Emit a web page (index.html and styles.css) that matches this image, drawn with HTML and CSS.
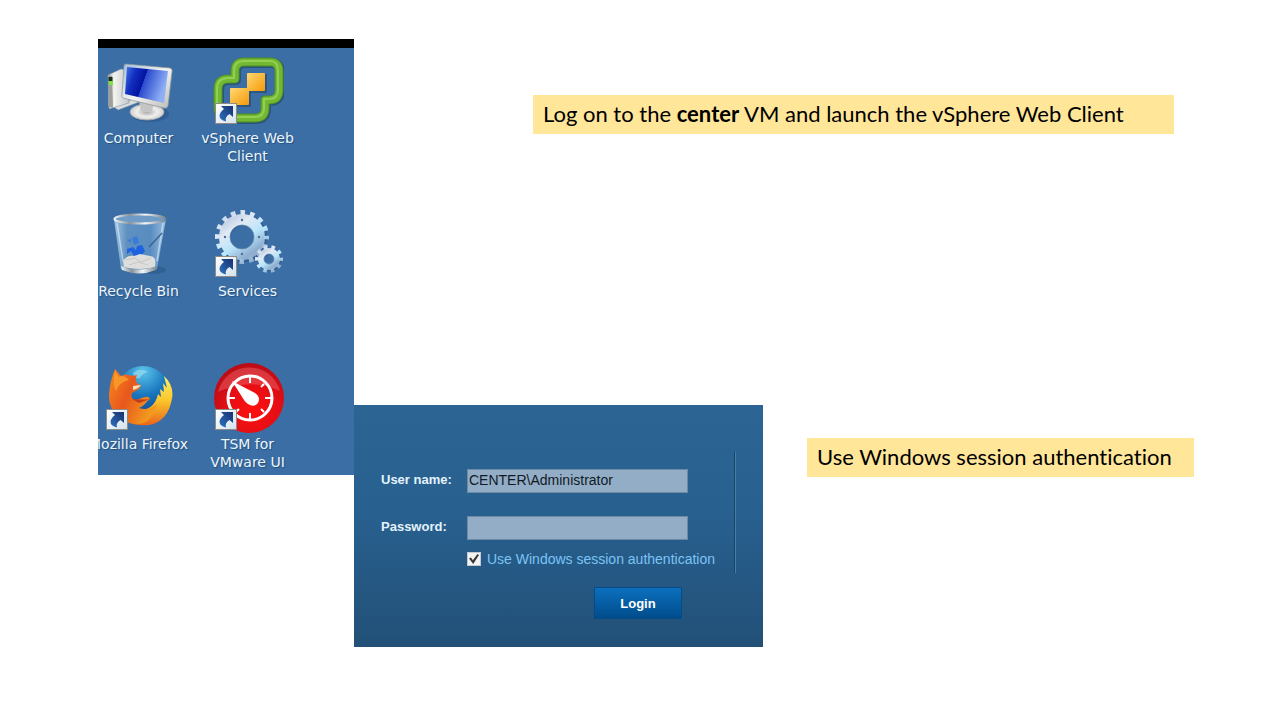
FILE: index.html
```
<!DOCTYPE html>
<html lang="en">
<head>
<meta charset="utf-8">
<title>Launch the vSphere Web Client</title>
<link rel="stylesheet" href="styles.css">
</head>
<body>
<svg class="defs" width="0" height="0" aria-hidden="true">
  <defs>
    <linearGradient id="box" x1="0" y1="0" x2="1" y2="1"><stop offset="0" stop-color="#ffffff"/><stop offset="1" stop-color="#d3e2ee"/></linearGradient>
    <linearGradient id="arrow" x1="1" y1="0" x2="0" y2="1"><stop offset="0" stop-color="#17306f"/><stop offset="1" stop-color="#2f72c0"/></linearGradient>
    <symbol id="shortcut" viewBox="0 0 22 21">
      <rect x=".5" y=".5" width="21" height="20" fill="url(#box)" stroke="#8f8b86"/>
      <path d="M6 3H18V14L14.500 11Q9.500 14 11 18.500Q4.500 17 4.500 12.500Q5 9 9 6Z" fill="url(#arrow)"/>
    </symbol>
  </defs>
</svg>
<main class="slide">
  <section class="desktop" aria-label="Desktop">
    <div class="icons">
      <button class="icon" type="button">
        <svg class="art" viewBox="0 0 72 72" aria-hidden="true">
          <defs>
            <linearGradient id="scr" x1="0" y1="0" x2="1" y2=".3"><stop offset="0" stop-color="#4a78e8"/><stop offset=".25" stop-color="#1230c0"/><stop offset=".5" stop-color="#0412a0"/><stop offset=".51" stop-color="#2a49cf"/><stop offset="1" stop-color="#8fb0f5"/></linearGradient>
            <linearGradient id="frame" x1="0" y1="0" x2="1" y2="1"><stop offset="0" stop-color="#9fbfd8"/><stop offset=".5" stop-color="#f4f4f0"/><stop offset="1" stop-color="#b9bab6"/></linearGradient>
            <linearGradient id="tower"><stop offset="0" stop-color="#b4b6b4"/><stop offset=".3" stop-color="#f4f3ef"/><stop offset="1" stop-color="#c0c5ca"/></linearGradient>
            <radialGradient id="base"><stop offset="0" stop-color="#a8a8a6"/><stop offset=".6" stop-color="#efefed"/><stop offset="1" stop-color="#cfd0cf"/></radialGradient>
          </defs>
          <path d="M11 51L32 42L36 46L15 54Z" fill="#d9dde0" stroke="#8c9aa7" stroke-width=".6"/>
          <path d="M5 19L18 13L26 15V47L6 53Z" fill="url(#tower)" stroke="#8797a6" stroke-width=".6"/>
          <path d="M5 19L9 20L10 52L5 50Z" fill="#9b9f9e"/>
          <rect x="5.500" y="21" width="4" height="4" fill="#18301a"/><rect x="6" y="25" width="4" height="4" fill="#7de23c"/>
          <ellipse cx="47" cy="58" rx="19" ry="8" fill="#2d5583" opacity=".6"/>
          <path d="M36 43L52 47L50 57H37Z" fill="#b1b3b3"/>
          <ellipse cx="44" cy="56" rx="17" ry="8" fill="url(#base)" stroke="#a1a5a7" stroke-width=".8"/>
          <path d="M38 44L51 47L49 55Q43 58 37 54Z" fill="#c4c5c4"/>
          <path d="M23 8L67 12Q70 13 69 16L65 50Q64 53 61 52L20 42Q18 41 19 38L21 10Q21 8 23 8Z" fill="url(#frame)" stroke="#8d9499" stroke-width=".7"/>
          <path d="M24 11L65 15L61 47L22 38Z" fill="url(#scr)"/>
        </svg>
        <span class="label">Computer</span>
      </button>
      <button class="icon" type="button">
        <svg class="art" viewBox="0 0 72 72" aria-hidden="true">
          <defs>
            <linearGradient id="or" x1="0" y1="0" x2="1" y2="1"><stop offset="0" stop-color="#ffd873"/><stop offset="1" stop-color="#f59a08"/></linearGradient>
          </defs>
          <g fill="none" stroke-linejoin="round">
            <path d="M32 6H58Q67 6 67 15V34Q67 44 57 44H53V52Q53 62 43 62H16Q6 62 6 52V33Q6 23 16 23H23V15Q23 6 32 6Z" transform="translate(1 1)" stroke="#284c6c" stroke-width="10" opacity=".75"/>
            <path d="M32 6H58Q67 6 67 15V34Q67 44 57 44H53V52Q53 62 43 62H16Q6 62 6 52V33Q6 23 16 23H23V15Q23 6 32 6Z" stroke="#4f8f24" stroke-width="9"/>
            <path d="M32 6H58Q67 6 67 15V34Q67 44 57 44H53V52Q53 62 43 62H16Q6 62 6 52V33Q6 23 16 23H23V15Q23 6 32 6Z" stroke="#72b832" stroke-width="7"/>
            <path d="M32 5H58Q66 5 66 15V34Q66 43 57 43H52V52Q52 61 43 61H16Q5 61 5 52V33Q5 22 16 22H22V15Q22 5 32 5Z" stroke="#93cf52" stroke-width="2"/>
          </g>
          <path d="M36 18H55V37H39V51H19V34H36Z" fill="#294b6d" opacity=".7"/>
          <rect x="35" y="17" width="18" height="18" rx="1" fill="url(#or)"/>
          <rect x="18" y="32" width="19" height="17" rx="1" fill="url(#or)"/>
          <use href="#shortcut" x="3" y="47" width="22" height="21"/>
        </svg>
        <span class="label">vSphere Web<br>Client</span>
      </button>
      <button class="icon" type="button">
        <svg class="art" viewBox="0 0 72 72" aria-hidden="true">
          <defs>
            <linearGradient id="glass"><stop offset="0" stop-color="#b9d6ee"/><stop offset=".25" stop-color="#6596c5"/><stop offset=".7" stop-color="#5e92c5"/><stop offset="1" stop-color="#a9cdec"/></linearGradient>
            <linearGradient id="rim"><stop offset="0" stop-color="#eef4f8"/><stop offset=".3" stop-color="#87929b"/><stop offset=".6" stop-color="#f5f7f8"/><stop offset="1" stop-color="#75818c"/></linearGradient>
          </defs>
          <ellipse cx="50" cy="61" rx="13" ry="4" fill="#2b5685" opacity=".6"/>
          <path d="M11 10L18 60Q35 67 54 60L63 10Z" fill="url(#glass)" opacity=".85"/>
          <path d="M14 14L20 52M60 14L54 52" stroke="#cfe5f7" stroke-width="1.500" opacity=".7"/>
          <path d="M59 24L46 38" stroke="#3c6590" stroke-width="1.500"/>
          <path d="M29 29L34 27L36 34L31 36ZM24 31L28 30L28 34Z" fill="#3276dc" opacity=".8"/>
          <path d="M34 37L39 36L42 42L38 47H31L28 42L24 45L24 40L30 38L33 41Z" fill="#1f62df"/>
          <path d="M20 52Q24 46 31 47L37 45L47 47Q54 47 52 58Q36 62 21 58Z" fill="#dedfdd"/>
          <path d="M23 51L32 49L38 53L48 49M26 56L35 53L45 56" stroke="#c6c9c8" fill="none"/>
          <path d="M18 57Q35 64 54 57L53 61Q36 68 19 61Z" fill="url(#rim)"/>
          <ellipse cx="37" cy="10" rx="25.500" ry="4.500" fill="#6e9cc6" stroke="url(#rim)" stroke-width="2.200"/>
        </svg>
        <span class="label">Recycle Bin</span>
      </button>
      <button class="icon" type="button">
        <svg class="art" viewBox="0 0 72 72" aria-hidden="true">
          <defs>
            <linearGradient id="gear" x1="0" y1="0" x2=".7" y2="1"><stop offset="0" stop-color="#bccce2"/><stop offset=".3" stop-color="#e1e9f4"/><stop offset=".65" stop-color="#b9e5fb"/><stop offset="1" stop-color="#8faed0"/></linearGradient>
          </defs>
          <g fill="none" stroke="#2c5585" opacity=".6"><circle cx="31" cy="29" r="18" stroke-width="12"/><circle cx="58" cy="51" r="8" stroke-width="6"/></g>
          <g fill="none" stroke="url(#gear)">
            <circle cx="30" cy="28" r="17.500" stroke-width="11"/>
            <circle cx="30" cy="28" r="24.500" stroke-width="5" stroke-dasharray="4.600 5.022" stroke-dashoffset="2.300"/>
            <circle cx="57" cy="50" r="8" stroke-width="6"/>
            <circle cx="57" cy="50" r="12" stroke-width="4" stroke-dasharray="3.500 4.040" stroke-dashoffset="1.750"/>
          </g>
          <g fill="none" stroke="#6488b0" stroke-width=".8"><circle cx="30" cy="28" r="12"/><circle cx="57" cy="50" r="5"/></g>
          <g fill="#526d91"><circle cx="30" cy="11" r="1.200"/><circle cx="13" cy="28" r="1.200"/><circle cx="47" cy="28" r="1.200"/><circle cx="30" cy="45" r="1.200"/></g>
          <use href="#shortcut" x="3" y="47" width="22" height="21"/>
        </svg>
        <span class="label">Services</span>
      </button>
      <button class="icon" type="button">
        <svg class="art" viewBox="0 0 72 72" aria-hidden="true">
          <defs>
            <radialGradient id="globe" cx=".5" cy=".1" r=".9"><stop offset="0" stop-color="#5cc4ea"/><stop offset=".5" stop-color="#1875bd"/><stop offset="1" stop-color="#123f86"/></radialGradient>
            <linearGradient id="fox" x1="0" y1="0" x2="1" y2=".5"><stop offset="0" stop-color="#f58a1f"/><stop offset=".5" stop-color="#e8571c"/><stop offset="1" stop-color="#f39a1e"/></linearGradient>
            <linearGradient id="tail" x1="0" y1="0" x2="0" y2="1"><stop offset="0" stop-color="#fff06a"/><stop offset=".5" stop-color="#fbc52b"/><stop offset="1" stop-color="#ea641b"/></linearGradient>
          </defs>
          <circle cx="40" cy="31" r="27" fill="url(#globe)"/>
          <path d="M30 11Q36 5 45 10Q39 11 37 16Q32 18 30 11Z" fill="#9cddf1" opacity=".65"/>
          <path d="M61 14Q73 25 68 41C64 58 51 65 37 63C21 62 9 51 8 37L28 42C38 53 52 47 55 32L58 35L57 27L61 30L60 21L64 26Z" fill="url(#tail)"/>
          <path d="M12 7L18 14Q23 11 29 14L34 13Q31 18 35 22Q40 23 36 27L29 31Q27 36 32 38C39 37 44 32 47 37C43 39 42 44 36 46C44 49 50 45 54 42C50 57 42 63 32 62C16 60 5 47 6 32Q7 19 12 7Z" fill="url(#fox)"/>
          <path d="M12 9Q9 23 13 29Q16 20 26 18Q20 12 16 15Z" fill="#f9a42f" opacity=".75"/>
          <path d="M30 24L38 23Q35 27 30 28Z" fill="#f6e0b8"/>
          <path d="M29 37Q38 38 47 37L36 41Z" fill="#bf3d17"/>
          <use href="#shortcut" x="3" y="47" width="22" height="21"/>
        </svg>
        <span class="label">Mozilla Firefox</span>
      </button>
      <button class="icon" type="button">
        <svg class="art" viewBox="0 0 72 72" aria-hidden="true">
          <defs>
            <radialGradient id="red" cx=".55" cy=".65" r=".65"><stop offset="0" stop-color="#ff1010"/><stop offset=".6" stop-color="#e30e14"/><stop offset="1" stop-color="#b80c16"/></radialGradient>
          </defs>
          <circle cx="37" cy="36" r="35" fill="url(#red)"/>
          <path d="M6 30A32 32 0 0 1 68 29Q39 15 6 30Z" fill="#f0868a" opacity=".35"/>
          <circle cx="38" cy="36" r="22" fill="none" stroke="#fff" stroke-width="3"/>
          <g fill="none" stroke="#fff" stroke-width="2"><path d="M38 15V21M38 51V57M17 36H23M53 36H59M52 22L49 25M24 50L27 47M52 50L49 47"/></g>
          <path d="M20 19L43 31Q49 35 46 41Q42 46 36 42Q33 40 32 38Z" fill="#fff"/>
          <use href="#shortcut" x="3" y="47" width="22" height="21"/>
        </svg>
        <span class="label">TSM for<br>VMware UI</span>
      </button>
    </div>
  </section>
  <div class="steps">
    <p class="note note-launch">Log on to the <strong>center</strong> VM and launch the vSphere Web Client</p>
    <div class="signin">
      <section class="login" aria-label="Login">
        <form class="form">
          <label class="name" for="user">User name:</label>
          <input class="field" id="user" type="text" value="CENTER\Administrator">
          <label class="name name-pass" for="pass">Password:</label>
          <input class="field field-pass" id="pass" type="password">
          <div class="option">
            <input class="tick" id="session" type="checkbox" checked>
            <label for="session">Use Windows session authentication</label>
          </div>
          <button class="submit" type="button">Login</button>
        </form>
        <div class="divider"></div>
      </section>
      <p class="note note-auth">Use Windows session authentication</p>
    </div>
  </div>
</main>
</body>
</html>
```
FILE: styles.css
```
* { box-sizing: border-box; }
body { margin: 0; background: #fff; color: #000; }
.defs { position: absolute; }
.slide { display: flex; align-items: flex-start; padding: 39px 86px 73px 98px; }

.desktop { flex: 0 0 256px; overflow: hidden; background: #3a6ea5; border-top: 9px solid #000; padding-bottom: 4px; }
.icons { display: grid; grid-template-columns: 109px 109px; row-gap: 44px; margin-left: -14px; padding-top: 8px; }
.icon { display: flex; flex-direction: column; align-items: center; justify-content: flex-start; gap: 1px; min-height: 109px; padding: 0; border: 0; background: none; color: #eef5fc; font: 14px/18px "DejaVu Sans", Verdana, sans-serif; text-shadow: 1px 1px 1px #24527f; }
.art { width: 72px; height: 72px; }
.label { white-space: nowrap; }

.steps { flex: 1; min-width: 0; padding-top: 56px; }
.note { margin: 0; padding: 4px 10px 6px; background: #ffe699; font: 22px/29px Lato, sans-serif; font-variant-ligatures: none; }
.note-launch { margin-left: 179px; margin-right: 20px; }
.signin { display: flex; align-items: flex-start; gap: 44px; margin-top: 271px; }
.note-auth { flex: 1; margin-top: 33px; white-space: nowrap; }

.login { flex: 0 0 409px; display: flex; align-items: flex-start; justify-content: space-between; padding: 47px 27px 28px; background: linear-gradient(#2c6593, #28608f 45%, #225077); font-family: "Liberation Sans", Arial, sans-serif; font-size: 14px; }
.form { display: grid; grid-template-columns: 86px 221px; align-items: start; padding-top: 17px; }
.name { color: #e4f2fc; font-weight: bold; font-size: 13px; line-height: 22px; }
.field { width: 100%; height: 24px; margin: 0 0 23px; padding: 0 1px 2px; border: 1px solid #6d8ba6; border-radius: 0; background: #94adc6; color: #101a26; font: 14px "Liberation Sans", Arial, sans-serif; }
.field-pass { margin-bottom: 9px; }
.option { grid-column: 2; display: flex; align-items: center; gap: 6px; height: 20px; color: #7cc3f5; white-space: nowrap; }
.tick { flex: none; appearance: none; width: 14px; height: 14px; margin: 0; border: 1px solid #c3cbd2; background: #f4f4f2; display: grid; place-items: center; }
.tick:checked::before { content: ""; width: 10px; height: 10px; background: #3a3a3a; clip-path: polygon(0 45%, 20% 35%, 38% 62%, 85% 0, 100% 10%, 42% 100%); }
.submit { grid-column: 2; justify-self: end; width: 88px; height: 32px; margin: 18px 6px 0 0; padding: 0; border: 1px solid #064a86; background: linear-gradient(#0c70bd, #004c8c); color: #fff; font: bold 13px "Liberation Sans", Arial, sans-serif; }
.divider { width: 2px; height: 121px; border-left: 1px solid #1d4263; border-right: 1px solid #4280ad; }
```
